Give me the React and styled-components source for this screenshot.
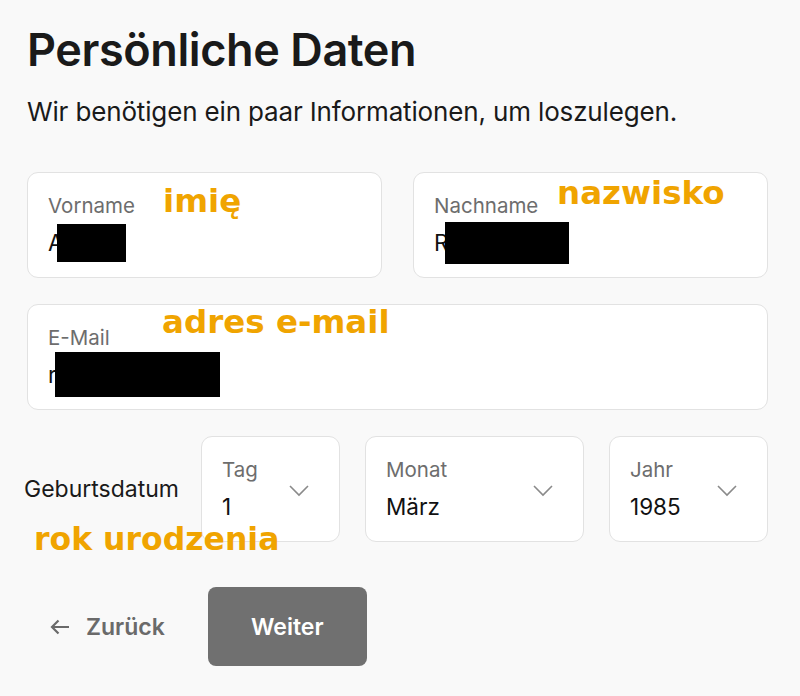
import React from 'react';
import styled, { createGlobalStyle } from 'styled-components';

const Global = createGlobalStyle`
  body {
    margin: 0;
    background: #f9f9f9;
    font-family: Inter, "Liberation Sans", sans-serif;
    color: #1a1a1a;
  }
`;

const Page = styled.div`
  position: relative;
  width: 800px;
  height: 696px;
  box-sizing: border-box;
  padding: 24px 32px 0 27px;
  overflow: hidden;
`;

const Title = styled.h1`
  margin: 0;
  font-size: 45px;
  font-weight: 600;
  letter-spacing: -0.4px;
  line-height: 52px;
`;

const Lead = styled.p`
  margin: 20px 0 0;
  font-size: 26px;
  line-height: 32px;
  letter-spacing: -0.15px;
  color: #1a1a1a;
`;

const Row = styled.div`
  display: flex;
  align-items: center;
  gap: ${p => p.gap || 31}px;
  margin-top: ${p => p.top || 26}px;
`;

const Field = styled.div`
  position: relative;
  flex: ${p => (p.w ? `0 0 ${p.w}px` : '1 1 0')};
  height: 106px;
  box-sizing: border-box;
  padding: 22px 30px 0 20px;
  background: #fff;
  border: 1px solid #e2e2e2;
  border-radius: 11px;
  display: flex;
  align-items: center;
  justify-content: space-between;
`;

const FieldText = styled.div`
  display: flex;
  flex-direction: column;
  align-self: flex-start;
`;

const Label = styled.span`
  font-size: 20.5px;
  line-height: 22px;
  color: #6d6d6d;
`;

const Value = styled.span`
  margin-top: 12px;
  font-size: 22.5px;
  line-height: 28px;
  color: #111;
`;

const Redact = styled.span`
  position: absolute;
  background: #000;
`;

const DateLabel = styled.span`
  flex: 0 0 152px;
  min-width: 0;
  margin-left: -3px;
  font-size: 23px;
  white-space: nowrap;
  color: #1a1a1a;
`;

const Chevron = styled.svg`
  width: 20px;
  height: 12px;
  margin-top: -18px;
`;

const Actions = styled.div`
  display: flex;
  align-items: center;
  gap: 43px;
  margin-top: 45px;
  padding-left: 23px;
`;

const Back = styled.button`
  display: flex;
  align-items: center;
  gap: 16px;
  border: none;
  background: none;
  padding: 0;
  font-family: inherit;
  font-size: 23px;
  font-weight: 600;
  color: #6a6a6a;
`;

const Next = styled.button`
  width: 159px;
  height: 79px;
  border: none;
  border-radius: 8px;
  background: #707070;
  color: #fff;
  font-family: inherit;
  font-size: 23px;
  font-weight: 600;
`;

const Note = styled.span`
  position: absolute;
  left: ${p => p.x}px;
  top: ${p => p.y}px;
  font-family: "DejaVu Sans", sans-serif;
  font-weight: 700;
  font-size: ${p => p.size || 32.5}px;
  line-height: 36px;
  color: #f0a400;
  white-space: nowrap;
`;

const Down = () => (
  <Chevron viewBox="0 0 20 12">
    <path d="M1 1l9 9 9-9" fill="none" stroke="#8a8a8a" strokeWidth="1.6" />
  </Chevron>
);

const App = () => {
  return (
    <Page>
      <Global />
      <Title>Persönliche Daten</Title>
      <Lead>Wir benötigen ein paar Informationen, um loszulegen.</Lead>

      <Row top={44}>
        <Field>
          <FieldText>
            <Label>Vorname</Label>
            <Value>A</Value>
          </FieldText>
          <Redact style={{ left: 29, top: 51, width: 69, height: 38 }} />
        </Field>
        <Field>
          <FieldText>
            <Label>Nachname</Label>
            <Value>R</Value>
          </FieldText>
          <Redact style={{ left: 31, top: 49, width: 124, height: 42 }} />
        </Field>
      </Row>

      <Row>
        <Field>
          <FieldText>
            <Label>E-Mail</Label>
            <Value>r</Value>
          </FieldText>
          <Redact style={{ left: 27, top: 47, width: 165, height: 45 }} />
        </Field>
      </Row>

      <Row gap={25}>
        <DateLabel>Geburtsdatum</DateLabel>
        <Field w={139}>
          <FieldText>
            <Label>Tag</Label>
            <Value>1</Value>
          </FieldText>
          <Down />
        </Field>
        <Field w={219}>
          <FieldText>
            <Label>Monat</Label>
            <Value>März</Value>
          </FieldText>
          <Down />
        </Field>
        <Field>
          <FieldText>
            <Label>Jahr</Label>
            <Value>1985</Value>
          </FieldText>
          <Down />
        </Field>
      </Row>

      <Actions>
        <Back>
          <svg width="20" height="16" viewBox="0 0 20 16">
            <path d="M19 8H2M8.5 1.5L2 8l6.5 6.5" fill="none" stroke="#6a6a6a" strokeWidth="2.2" />
          </svg>
          Zurück
        </Back>
        <Next>Weiter</Next>
      </Actions>

      <Note x={163} y={183}>imię</Note>
      <Note x={557} y={175}>nazwisko</Note>
      <Note x={162} y={304}>adres e-mail</Note>
      <Note x={34} y={521} size={31.5}>rok urodzenia</Note>
    </Page>
  );
};

export default App;
